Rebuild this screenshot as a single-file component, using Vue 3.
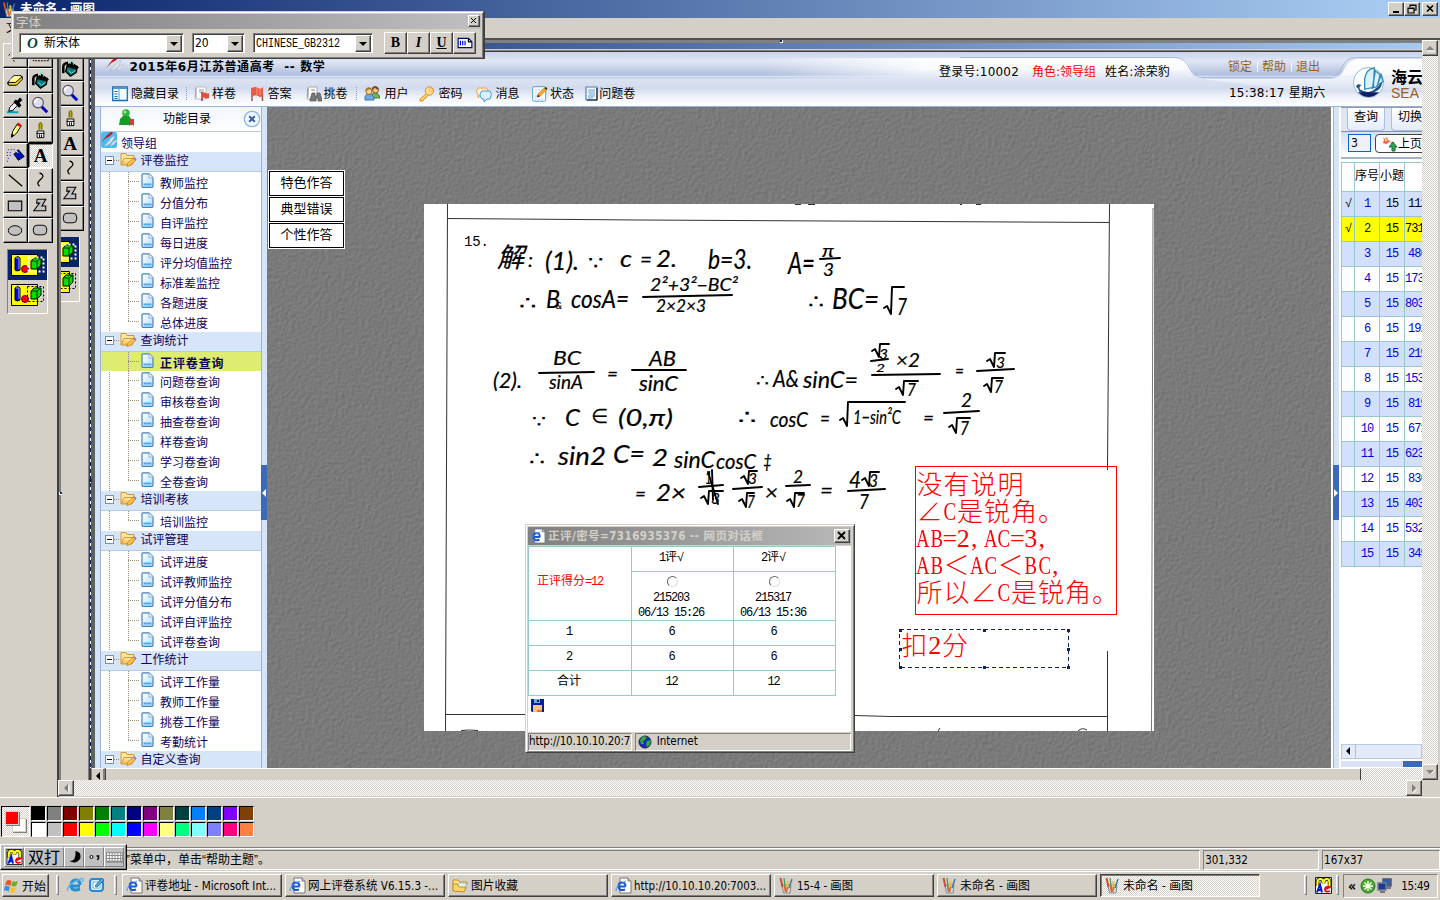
<script setup>
const tree = [
  { name: '评卷监控', items: ['教师监控', '分值分布', '自评监控', '每日进度', '评分均值监控', '标准差监控', '各题进度', '总体进度'] },
  { name: '查询统计', items: ['正评卷查询', '问题卷查询', '审核卷查询', '抽查卷查询', '样卷查询', '学习卷查询', '全卷查询'] },
  { name: '培训考核', items: ['培训监控'] },
  { name: '试评管理', items: ['试评进度', '试评教师监控', '试评分值分布', '试评自评监控', '试评卷查询'] },
  { name: '工作统计', items: ['试评工作量', '教师工作量', '挑卷工作量', '考勤统计'] },
  { name: '自定义查询', items: [] }
]
const tools = ['freesel', 'rectsel', 'eraser', 'bucket', 'dropper', 'magnify', 'pencil', 'brush', 'spray', 'letter', 'line', 'curve', 'rect', 'polygon', 'ellipse', 'round']
const innerTools = ['bucket', 'magnify', 'brush', 'letter', 'curve', 'polygon', 'round']
const nav = [
  ['panel', '隐藏目录', 112, 131], ['sheetflag', '样卷', 194, 212], ['flag', '答案', 250, 267.5], ['binocular', '挑卷', 306, 323.5],
  ['users', '用户', 364, 384.5], ['key', '密码', 419, 438.5], ['chat', '消息', 476, 495.5], ['note', '状态', 532, 550], ['doclist', '问题卷', 584, 599]
].map((n, i, a) => ({ icon: n[0], label: n[1], lead: n[2] - (i ? a[i - 1][3] + a[i - 1][1].length * 12 : 95), gap: n[3] - n[2] }))
const numbers = ['112', '731', '486', '173', '803', '192', '219', '153', '819', '671', '623', '836', '403', '532', '349']
const wideRows = [1, 3, 4, 7, 10, 12, 13]
const swatches = ['#000', '#808080', '#800000', '#808000', '#008000', '#008080', '#000080', '#800080', '#808040', '#004040', '#0080ff', '#004080', '#8000ff', '#804000',
  '#fff', '#c0c0c0', '#f00', '#ff0', '#0f0', '#0ff', '#00f', '#f0f', '#ffff80', '#00ff80', '#80ffff', '#8080ff', '#ff0080', '#ff8040']
const tasks = [
  ['ie', '评卷地址 - Microsoft Int...', 131], ['ie', '网上评卷系统 V6.15.3 -...', 130], ['folderpic', '图片收藏', 47], ['ie', 'http://10.10.10.20:7003...', 132],
  ['paint', '15-4 - 画图', 56], ['paint', '未命名 - 画图', 70], ['paint', '未命名 - 画图', 70]
]
const note = ['没有说明', '∠C是锐角。', 'AB=2,AC=3,', 'AB＜AC＜BC,', '所以∠C是锐角。']
const cell = c => c.charCodeAt(0) > 255 ? 'full' : c === ',' ? 'half comma' : /[A-Z]/.test(c) ? 'half cap' : 'half'
/* x, baseline, size, text, width */
const ink = [
  [497, 267, 27, '解', 27], [528, 267, 20, ':', 5], [545, 270, 25, '(1).', 34], [588, 269, 18, '∵', 15], [620, 267, 24, 'c', 12], [640, 267, 22, '=', 12], [656, 267, 24, '2.', 21], [708, 269, 27, 'b=3.', 44],
  [788, 274, 31, 'A=', 27], [822, 257, 18, 'π', 12], [823, 276, 18, '3', 11],
  [519, 309, 18, '∴', 17], [546, 308, 26, 'B', 14], [556, 309, 10, '&', 6], [571, 308, 25, 'cosA=', 58], [650, 291, 18, '2²+3²−BC²', 88], [656, 312, 18, '2×2×3', 50],
  [808, 308, 19, '∴', 16], [832, 309, 29, 'BC=', 47], [897, 315, 24, '7', 10],
  [493, 388, 21, '(2).', 29], [553, 365, 20, 'BC', 28], [549, 389, 20, 'sinA', 34], [607, 381, 20, '=', 11], [649, 366, 21, 'AB', 27], [639, 391, 21, 'sinC', 39],
  [756, 386, 16, '∴', 13], [773, 387, 23, 'A&', 26], [803, 388, 23, 'sinC=', 55], [879, 359, 13, '3', 9], [876, 372, 12, '2', 9], [896, 367, 19, '×2', 24], [907, 396, 18, '7', 9],
  [955, 378, 20, '=', 9], [996, 368, 15, '3', 9], [994, 393, 17, '7', 9],
  [532, 427, 16, '∵', 14], [565, 426, 24, 'C', 15], [591, 423, 20, '∈', 17], [618, 426, 23, '(0,π)', 55], [738, 424, 20, '∴', 19], [770, 427, 22, 'cosC', 38],
  [820, 426, 22, '=', 10], [853, 424, 20, '1−sin²C', 48], [923, 425, 20, '=', 11], [961, 407, 19, '2', 11], [960, 435, 19, '7', 9],
  [529, 465, 19, '∴', 16], [558, 465, 25, 'sin2', 48], [613, 463, 25, 'C=', 32], [652, 466, 24, '2', 16], [674, 468, 23, 'sinC', 41], [716, 469, 22, 'cosC', 40], [763, 468, 20, '‡', 9],
  [635, 501, 20, '=', 11], [656, 501, 24, '2×', 30], [705, 484, 17, '1', 7], [711, 504, 15, '3', 9], [748, 484, 15, '3', 9], [747, 508, 17, '7', 8], [765, 500, 21, '×', 13],
  [793, 483, 18, '2', 10], [796, 507, 17, '7', 9], [820, 498, 22, '=', 13], [849, 488, 23, '4', 12], [869, 487, 17, '3', 9], [859, 509, 21, '7', 10]
]
/* x, top, bottom, right end of each radical sign */
const roots = [[884, 287, 315, 904], [872, 344, 358, 889], [896, 381, 396, 918], [987, 353, 368, 1005], [984, 378, 393, 1003], [840, 402, 427, 905], [949, 418, 434, 970],
  [701, 491, 505, 723], [741, 471, 485, 757], [739, 493, 508, 754], [787, 493, 508, 804], [862, 472, 487, 879]]
const bars = [[820, 259, 840, 258], [643, 297, 732, 295], [539, 373, 594, 372], [632, 370, 686, 370], [871, 361, 888, 359], [872, 375, 940, 374], [977, 371, 1014, 369],
  [944, 413, 979, 411], [699, 487, 723, 485], [733, 489, 762, 487], [786, 486, 810, 485], [848, 491, 885, 489], [708, 472, 718, 504], [712, 470, 713, 500]]
</script>

<template>
  <div class="screen">
    <svg class="defs" width="0" height="0">
      <defs>
        <filter id="stone" x="0" y="0" width="100%" height="100%" color-interpolation-filters="sRGB">
          <feTurbulence type="fractalNoise" baseFrequency="0.3" numOctaves="3" seed="4" />
          <feDiffuseLighting surfaceScale="0.6" diffuseConstant="0.7" lighting-color="#ffffff"><feDistantLight azimuth="225" elevation="43" /></feDiffuseLighting>
        </filter>
        <linearGradient id="sky" x1="0" y1="0" x2="0" y2="1"><stop offset="0" stop-color="#c8d3ec" /><stop offset=".35" stop-color="#e0e6f4" /><stop offset=".85" stop-color="#b3c1e0" /><stop offset="1" stop-color="#c4d0ea" /></linearGradient>
        <linearGradient id="pale" x1="0" y1="0" x2="0" y2="1"><stop offset="0" stop-color="#fff" /><stop offset=".45" stop-color="#f7f9fd" /><stop offset="1" stop-color="#d6deef" /></linearGradient>
        <linearGradient id="fade" x1="0" x2="1"><stop offset="0" stop-color="#fff" stop-opacity="0" /><stop offset=".35" stop-color="#fff" /></linearGradient>
        <mask id="fademask" maskUnits="userSpaceOnUse" maskContentUnits="userSpaceOnUse" x="765" y="0" width="450" height="32"><rect x="765" width="450" height="32" fill="url(#fade)" /></mask>
        <linearGradient id="gold" x1="0" y1="0" x2="0" y2="1"><stop offset="0" stop-color="#fff0a8" /><stop offset="1" stop-color="#f3b54c" /></linearGradient>
        <linearGradient id="leaf" x1="0" y1="0" x2="1" y2="1"><stop offset="0" stop-color="#fff" /><stop offset="1" stop-color="#b8dcff" /></linearGradient>
      </defs>
      <symbol id="i-freesel" viewBox="0 0 24 24"><path d="M5 12l5-7 2 6 6-5M8 13l3 6" fill="none" stroke="#000" stroke-dasharray="2 2" /></symbol>
      <symbol id="i-rectsel" viewBox="0 0 24 24"><path d="M4.500 6.500h16v11h-16z" fill="none" stroke="#000" stroke-dasharray="2 1" /></symbol>
      <symbol id="i-eraser" viewBox="0 0 24 24"><path d="M4 14l6-7h8l1 2-6 7H4z" fill="#ffff80" stroke="#000" /><path d="M4 14h8l7-6v3l-6 6H5z" fill="#f0d020" stroke="#000" /><path d="M6 12l5-4h5" stroke="#fff" fill="none" /></symbol>
      <symbol id="i-bucket" viewBox="0 0 24 24"><path d="M9 8l10 2-1 6-6 4-5-5z" fill="#008080" stroke="#000" stroke-width="1.500" /><path d="M7 10l6-5 8 6-4 2z" fill="#000" /><path d="M12 7V4h3v4M10 14l3 3 4-3" fill="none" stroke="#7dd" /><path d="M4.500 17V10q0-3 5-4" fill="none" stroke="#000" stroke-width="2.600" /></symbol>
      <symbol id="i-dropper" viewBox="0 0 24 24"><path d="M3 19h12M5 17h5" stroke="#00a8b8" stroke-width="2" /><path d="M5 18l1-4 7-7 3 3-7 7z" fill="#fff" stroke="#000" /><path d="M11 7l6 6M14 9l4-4" stroke="#000" stroke-width="3.500" /></symbol>
      <symbol id="i-magnify" viewBox="0 0 24 24"><path d="M13 13l6 6" stroke="#0000c8" stroke-width="3" /><circle cx="9.500" cy="9" r="5.500" fill="#dcdcec" stroke="#505060" stroke-width="1.200" /><path d="M6 9q0-3 3-4" stroke="#fff" stroke-width="2" fill="none" /></symbol>
      <symbol id="i-pencil" viewBox="0 0 24 24"><path d="M8 19l1-6 5-8 4 2-5 8z" fill="#ffff80" stroke="#000" /><path d="M14 5l3 2" stroke="red" stroke-width="3" /><path d="M8 19l0-3 2 1z" stroke="#000" fill="#000" /></symbol>
      <symbol id="i-brush" viewBox="0 0 24 24"><path d="M10.500 11V5q1.500-3 3 0v6" fill="#b8a800" stroke="#605800" /><path d="M8.500 12.500h7v7h-7zM8 15h8M11 16v3M13 16v3" fill="#fff" stroke="#000" /></symbol>
      <symbol id="i-spray" viewBox="0 0 24 24"><path d="M10 10l5-4 6 7-6 4z" fill="#0010c0" stroke="#000" /><path d="M10 10l2-3 3 2" stroke="#fff" fill="#444" /><path d="M4 6h7M3 9h5M3 12h5M4 15h3M3 18h3" stroke="#0000c8" stroke-dasharray="1 2" /></symbol>
      <symbol id="i-line" viewBox="0 0 24 24"><path d="M5 6l14 12" stroke="#000" stroke-width="1.300" /></symbol>
      <symbol id="i-curve" viewBox="0 0 24 24"><path d="M11 4q5 2 3 5l-4 4q-2 2 1 5" fill="none" stroke="#000" stroke-width="1.300" /></symbol>
      <symbol id="i-rect" viewBox="0 0 24 24"><path d="M4.500 7.500h14v10h-14z" fill="#c0c0c0" stroke="#000" stroke-width="1.200" /></symbol>
      <symbol id="i-polygon" viewBox="0 0 24 24"><path d="M8.500 5.500h9l-4 7h4v5H5l6-8H8z" fill="#c0c0c0" stroke="#000" stroke-width="1.100" /></symbol>
      <symbol id="i-ellipse" viewBox="0 0 24 24"><ellipse cx="11.500" cy="12" rx="7" ry="5" fill="#c0c0c0" stroke="#000" /></symbol>
      <symbol id="i-round" viewBox="0 0 24 24"><rect x="4.500" y="6.500" width="14" height="10" rx="4" fill="#c0c0c0" stroke="#000" /></symbol>
      <symbol id="i-shapes" viewBox="0 0 38 29"><path d="M3.500 4.500h26v21h-26z" fill="#ff0" stroke="#000" /><path d="M7 8q3-3 5 0v12q-3 2-5 0z" fill="#00f" stroke="#000" /><path d="M8 8h3v11" stroke="#aaf" fill="none" /><circle cx="17" cy="19" r="3.500" fill="#f00" stroke="#606" /><path d="M23 11l3-3h7v7l-4 4h-6z" fill="#0d0" stroke="#000" /><path d="M23 11h6v8M29 11l4-3" fill="none" stroke="#030" /></symbol>
      <symbol id="i-panel" viewBox="0 0 16 16"><path d="M.7 1h14.600v13.500H.7z" fill="#f5faff" stroke="#236ca2" stroke-width="1.300" /><path d="M1 2h14" stroke="#5294ca" stroke-width="2" /><path d="M2.500 5.500h3m-3 2.500h3m-3 2.500h3m-3 2h3" stroke="#1670aa" /><path d="M7 3v11" stroke="#4c9ed4" /></symbol>
      <symbol id="i-sheetflag" viewBox="0 0 16 16"><path d="M2 1h10v12H1z" fill="#fff" stroke="#bbb" /><path d="M2 2v10M5 4h5M5 6h5" stroke="#999" /><path d="M8 6v9" stroke="#835" stroke-width="1.500" /><path d="M8 7q2-1 4 0t3 0v5q-2 1-4 0t-3 0z" fill="#df5136" /></symbol>
      <symbol id="i-flag" viewBox="0 0 16 16"><path d="M2 2v13M12.500 8v7" stroke="#9a5b44" stroke-width="1.500" /><path d="M2 2q3-2 6 0t5-1v9q-2 2-5 0t-6 1z" fill="#e95a48" /><path d="M7 2v7M10 2v7" stroke="#f39a7e" /></symbol>
      <symbol id="i-binocular" viewBox="0 0 16 16"><path d="M2 1h9v12H1z" fill="#fff" stroke="#aaa" /><path d="M2 2v9M5 4h4" stroke="#888" /><path d="M6 7h3v3h2V7h3l2 7v1h-4v-3h-2v3H4v-1z" fill="#777" stroke="#555" stroke-width=".7" /></symbol>
      <symbol id="i-users" viewBox="0 0 16 16"><path d="M8 12q-1-5 3-5t5 5z" fill="#71b55e" stroke="#3a803a" /><circle cx="11.500" cy="4" r="3" fill="#f6c58d" stroke="#865423" /><path d="M8.500 3q2-4 5.500 0" fill="none" stroke="#76471b" stroke-width="2" /><path d="M1 14q-1-6 4-6t5 6z" fill="#6ba9df" stroke="#397bae" /><circle cx="5" cy="5.500" r="3" fill="#ffd393" stroke="#966727" /><path d="M2 5q1-4 5-2" fill="none" stroke="#a8752c" stroke-width="2" /></symbol>
      <symbol id="i-key" viewBox="0 0 16 16"><circle cx="10.500" cy="5" r="4.200" fill="#ffd88b" stroke="#d8912b" /><path d="M7.500 7.500L1 13v2h3l1-2 2-1 2-3" fill="#ffd36b" stroke="#d8912b" /><circle cx="12" cy="4" r="1.300" fill="#fff" stroke="#d8912b" stroke-width=".6" /></symbol>
      <symbol id="i-chat" viewBox="0 0 16 16"><path d="M2 2h8q4 3 1 7H4l-2 3V9Q-1 5 2 2z" fill="#fff1ca" stroke="#ef9c52" /><path d="M6 5h8q3 3 0 8h-3l-3 3v-3H6Q2 9 6 5z" fill="#d9f0ff" stroke="#4d9bd1" /></symbol>
      <symbol id="i-note" viewBox="0 0 16 16"><rect x=".7" y=".7" width="13" height="14.500" rx="1.500" fill="#fff" stroke="#529cd0" /><path d="M3 4h8M3 7h5m-5 3h7m-7 3h8" stroke="#a8cff0" stroke-dasharray="2 1" /><path d="M5 11l1-3 6-6 2.500 2-6 6z" fill="#f9a72b" stroke="#dc8b27" stroke-width=".6" /><path d="M5 11.500l1-3 2 2zM12 2l2-1 1.500 1.500L14.500 4z" fill="#333" /></symbol>
      <symbol id="i-doclist" viewBox="0 0 16 16"><path d="M2 1h11v13H2z" fill="#f4faff" stroke="#507fa8" stroke-width="1.200" /><path d="M13 2v12H3" stroke="#111" fill="none" /><path d="M4 4h7m-7 2h7M5 8h6M4 10h7m-7 2h5" stroke="#6f9bcc" /></symbol>
      <symbol id="i-page" viewBox="0 0 13 15"><path d="M2 .8h6l4 4v8.500q0 1-1 1H2q-1 0-1-1v-11Q1 .8 2 .8z" fill="url(#leaf)" stroke="#4680b8" stroke-width="1.200" /><path d="M8 1v4h4" fill="#fff" stroke="#7fb0db" /><path d="M2.500 11.500h8" stroke="#4aaef2" stroke-width="2" /></symbol>
      <symbol id="i-folder" viewBox="0 0 17 15"><path d="M1 13V1.500h5l1 2h7V6" fill="#ffe7a0" stroke="#d79832" /><path d="M1 13l3-6.500h11.500L12 13z" fill="url(#gold)" stroke="#d79832" /><path d="M7 14.500l.5-3 6-5.500 2.500 2-6 5.500z" fill="#ffc344" stroke="#b67826" stroke-width=".7" /><path d="M13.500 6l2.500 2" stroke="#a97bae" stroke-width="2" /></symbol>
      <symbol id="i-logo" viewBox="0 0 16 16"><path d="M0 11Q6 2 10 0q4 0-1 4Q4 6 0 11z" fill="#c71c24" /><path d="M3 14Q7 11 11 5q4-2 2 1-3 7-10 8zM9 14q3-5 6-6 2 0-1 3-2 3-5 3z" fill="#e3e7ee" stroke="#9da9bc" stroke-width=".5" /></symbol>
      <symbol id="i-person" viewBox="0 0 16 17"><circle cx="7" cy="4" r="3.800" fill="#2eb635" /><path d="M4 7h6l3 4 1 5H0l1-6z" fill="#179c25" /><circle cx="6" cy="3" r="1.500" fill="#9bec8b" /><path d="M10 10h5v7l-2-2-3 2z" fill="#d33c38" /></symbol>
      <symbol id="i-ie" viewBox="0 0 17 17"><path d="M5 1h8l3 3v12H5z" fill="#fff" stroke="#777" /><path d="M13 1v3h3" fill="#ccd" stroke="#777" /><path d="M10.500 9.500H3.500q0-4 3.500-4t3.500 4M3.500 9.500q.5 5 6.500 3" fill="none" stroke="#1c55d5" stroke-width="2" /><path d="M1 14Q0 9 11 4" fill="none" stroke="#3b91f2" /></symbol>
      <symbol id="i-ebig" viewBox="0 0 18 18"><path d="M14 10H5q0-6 5-6 4 0 4 5M5 10q1 6 9 3" fill="none" stroke="#258fd3" stroke-width="3" /><path d="M2 15Q-1 10 14 3q5-2 2 3" fill="none" stroke="#62b5e5" stroke-width="1.500" /></symbol>
      <symbol id="i-outlook" viewBox="0 0 18 18"><rect x="2" y="3" width="13" height="12" rx="3" fill="#d5efff" stroke="#278bd2" stroke-width="2" /><path d="M5 6h7v6H5z" fill="#fff" stroke="#70b3db" /><path d="M7 10l7-8 2 2-7 7z" fill="#5ba8db" stroke="#1c77b8" /></symbol>
      <symbol id="i-folderpic" viewBox="0 0 17 17"><path d="M1 14V3h5l2 2h7v3" fill="#ffe28a" stroke="#c58f24" /><path d="M6 6h8v7H6z" fill="#e2f4fb" stroke="#9dbfc7" /><path d="M1 14V7h4l2 3h7l-2 5z" fill="#ffd467" stroke="#c58f24" /></symbol>
      <symbol id="i-paint" viewBox="0 0 16 17"><path d="M3.500 8h9l-1 8H5z" fill="#d7e0e6" stroke="#798b98" /><path d="M4 10L2 1" stroke="#d64b27" stroke-width="2" /><path d="M7 13L5.500 1" stroke="#30a05c" stroke-width="1.300" /><path d="M9 13V4" stroke="#f1bf2f" stroke-width="2" /><path d="M10.500 11l3-9" stroke="#4279b0" stroke-width="1.500" /><path d="M6 9l1 6m2-5l-1 5" stroke="#e0632c" stroke-width="1.500" /></symbol>
      <symbol id="i-windows" viewBox="0 0 16 16"><path d="M3 2q3-1 5 1L7 8Q4 6 1 7z" fill="#e55822" /><path d="M9 3q3 1 6 0l-2 5q-2 1-5 0z" fill="#6bad30" /><path d="M1 8q3-1 5 1l-1 5q-2-2-5-1z" fill="#3a8de0" /><path d="M7 9q3 2 6 0l-2 6q-3 1-5-1z" fill="#f5c331" /></symbol>
      <symbol id="i-ime" viewBox="0 0 17 17"><path d="M.5.5h16v16H.5z" fill="#f4f4f4" stroke="#222" /><path d="M2.500 9V5q0-3 3-3 2.500 0 3 4Q9 2 11.500 2q3 0 3 3v4" fill="none" stroke="#000" stroke-width="3.400" /><path d="M2.500 9V5q0-3 3-3 2.500 0 3 4Q9 2 11.500 2q3 0 3 3v4" fill="none" stroke="#ff0" stroke-width="2.200" /><path d="M2 15.500l3-8 2 8M3 13h4" stroke="#0018df" stroke-width="2" fill="none" /><path d="M15 14q-5 2-5-1.500t5-2.500l-4 2" stroke="#f00000" stroke-width="1.800" fill="none" /></symbol>
      <symbol id="i-floppy" viewBox="0 0 13 14"><path d="M0 0h13v13H1L0 12z" fill="#0020a0" /><path d="M3 0h6v4H3z" fill="#6aaed4" /><path d="M6 1h2v2H6z" fill="#124" /><path d="M2 6h9v7H2z" fill="#ffc080" /><path d="M6 12h5" stroke="#d72" stroke-width="2" /></symbol>
      <symbol id="i-globe" viewBox="0 0 14 14"><circle cx="7" cy="7" r="6" fill="#1628bf" stroke="#224" /><path d="M2 5l3-4 4 1-2 3-2 1 1 3H3zM9 6l4-1-1 5-3 2-1-3z" fill="#32a83b" /></symbol>
    </svg>

    <header class="titlebar"><svg class="ti"><use href="#i-paint" /></svg><b>未命名 - 画图</b>
      <div class="winbtns"><i class="raised"><svg viewBox="0 0 14 12"><path d="M4 9h6" stroke="#000" stroke-width="2" /></svg></i><i class="raised"><svg viewBox="0 0 14 12"><path d="M5 4V2h6v5H9M3 5h6v5H3zM3 5.500h6M5 2.500h6" fill="none" stroke="#000" stroke-width="1.200" /></svg></i><i class="raised last"><svg viewBox="0 0 14 12"><path d="M4 2.500l6 6M10 2.500l-6 6" stroke="#000" stroke-width="1.700" /></svg></i></div>
    </header>
    <div class="menubar">文件</div>

    <div class="work">
      <aside class="toolbox">
        <div class="toolgrid"><div v-for="t in tools" :key="t" class="tool" :class="{ on: t === 'letter' }"><b v-if="t === 'letter'">A</b><svg v-else><use :href="'#i-' + t" /></svg></div></div>
        <div class="options"><div class="opt sel"><svg><use href="#i-shapes" /><rect x="20.500" y="7.500" width="15" height="14" class="dash w" /></svg></div><div class="opt"><svg><use href="#i-shapes" /><rect x="19.500" y="6.500" width="16" height="15" class="dash" /></svg></div></div>
      </aside>

      <section class="frame">
        <div class="canvas">
          <i class="handle h1"></i><i class="handle h2"></i>
          <div class="shot">
            <div class="bluestrip"></div>
            <div class="shotbody">
              <aside class="tools2">
                <div v-for="t in innerTools" :key="t" class="tool2"><b v-if="t === 'letter'">A</b><svg v-else><use :href="'#i-' + t" /></svg></div>
                <div class="options2"><div class="opt sel"><svg><use href="#i-shapes" /><rect x="20.500" y="7.500" width="15" height="14" class="dash w" /></svg></div><div class="opt"><svg><use href="#i-shapes" /><rect x="19.500" y="6.500" width="16" height="15" class="dash" /></svg></div></div>
              </aside>
              <div class="edge"><div class="edgelines"><i class="handle h3"></i></div></div>
              <div class="pagewrap">
                <div class="page">
                  <div class="banner">
                    <svg class="bannerart" viewBox="95 52 1327 55">
                      <rect x="95" y="52" width="1327" height="26" fill="url(#sky)" />
                      <g transform="translate(0 52)"><path d="M765 6H1176C1193 6 1188 25 1202 26L1202 30H765z" fill="url(#pale)" mask="url(#fademask)" /><path d="M960 5.500H1173C1193 5.500 1186 25 1202 25.500H1330C1345 24 1338 5.500 1358 5.500H1422" fill="none" stroke="#a9b8d9" /><path d="M1202 27H1330C1347 27 1341 8 1359 7H1422V40H1310z" fill="url(#pale)" /></g>
                      <path d="M95 76.500H1422" stroke="#e4eaf7" opacity=".7" />
                    </svg>
                    <div class="bannertop">
                      <svg class="logo"><use href="#i-logo" /></svg><b class="apptitle">2015年6月江苏普通高考&nbsp; -- 数学</b>
                      <span class="login">登录号:10002</span><span class="role">角色:领导组</span><span class="name">姓名:涂荣豹</span>
                      <span class="links">锁定<i></i>帮助<i></i>退出</span>
                    </div>
                    <nav class="navbar"><div v-for="n in nav" :key="n.label" class="navitem" :style="{ marginLeft: n.lead + 'px' }"><svg :style="{ marginRight: n.gap - 16 + 'px' }"><use :href="'#i-' + n.icon" /></svg>{{ n.label }}</div><span class="clock">15:38:17 星期六</span></nav>
                    <i class="sep s1"></i><i class="sep s2"></i>
                    <div class="brand"><svg viewBox="0 0 34 34"><circle cx="16" cy="17" r="15.500" fill="#fff" stroke="#8fb8d5" /><path d="M12 24V13Q14 3 22 2l-1 20zM20 23l3-18 5 4-3 12zM25 20l4-11 2 7z" fill="#d9f2fa" stroke="#2c84b9" stroke-width="1.300" /><path d="M3 21q2-4 6-1-3 0-2 4 8 5 14 1t9-9q0 8-8 11-11 3-16-1 0-3-3-5z" fill="#195388" /><path d="M5 27h22q-11 10-22 0z" fill="#0c1d67" /></svg><div><b>海云</b><em>SEA</em></div></div>
                  </div>
                  <div class="pagebody">
                    <aside class="sidebar">
                      <div class="sidehead"><svg class="person"><use href="#i-person" /></svg><span>功能目录</span><svg class="close" viewBox="0 0 18 18"><circle cx="9" cy="9" r="7.700" fill="#eef6ff" stroke="#8fb4df" stroke-width="1.300" /><path d="M6.200 6.200l5.600 5.600m0-5.600l-5.600 5.600" stroke="#3c628d" stroke-width="2" /></svg></div>
                      <div class="rootrow"><svg viewBox="0 0 16 16"><rect width="16" height="16" rx="2" fill="#4abcf0" /><use href="#i-logo" /></svg>领导组</div>
                      <div v-for="g in tree" :key="g.name" class="group">
                        <div class="grouphead"><i class="minus"></i><i class="dots"></i><svg><use href="#i-folder" /></svg><span>{{ g.name }}</span></div>
                        <div v-for="(c, k) in g.items" :key="c" class="leaf" :class="{ active: c === '正评卷查询', end: k === g.items.length - 1 }"><i class="branch"></i><svg><use href="#i-page" /></svg><span>{{ c }}</span></div>
                      </div>
                    </aside>
                    <div class="gutter"><i></i></div>
                    <main class="desk">
                      <svg class="stone" width="1064" height="661"><rect width="1064" height="661" fill="#7b7b7b" /><rect width="1064" height="661" filter="url(#stone)" opacity=".35" /></svg>
                      <div class="quick"><button>特色作答</button><button>典型错误</button><button>个性作答</button></div>
                      <svg class="paper" viewBox="424 204 730 527">
                        <rect x="424" y="204" width="730" height="527" fill="#fff" />
                        <g fill="none" stroke="#333"><path d="M447.500 204L445.500 731M447 218.500L640 220 1109 222.500M1109.500 204L1107.500 470M1107.500 651V731M445 714.500H526M855 715.500L890 716.500H1107" /><path d="M1153 208L1151.500 731" stroke="#777" /><path d="M795 204.500h6M808 204.500h7M960 204.500h2M976 204.500h5M461 730.500q8-1 17 0M938 731l2-3M1078 731q4-4 9-1" /></g>
                        <text x="464" y="246" class="printed" textLength="25">15.</text>
                        <g class="ink"><text v-for="(t, k) in ink" :key="k" :x="t[0]" :y="t[1]" :font-size="t[2]" :textLength="t[4]" lengthAdjust="spacingAndGlyphs">{{ t[3] }}</text></g>
                        <g fill="none" stroke="#000" stroke-width="1.900" stroke-linecap="round" stroke-linejoin="round">
                          <path v-for="(r, k) in roots" :key="k" :d="`M${r[0]} ${r[2] - 7}l3-2 4 8L${r[0] + 8} ${r[1]}H${r[3]}`" />
                          <path v-for="(b, k) in bars" :key="'b' + k" :d="`M${b[0]} ${b[1]}L${b[2]} ${b[3]}`" />
                        </g>
                      </svg>
                      <div class="note"><div v-for="l in note" :key="l"><span v-for="(c, k) in l" :key="k" :class="cell(c)">{{ c }}</span></div></div>
                      <div class="deduct"><svg width="171" height="40"><rect x=".5" y=".5" width="169" height="38" fill="none" stroke="#0a246a" stroke-dasharray="4 3" shape-rendering="crispEdges" /><path d="M0 0h3v3H0zM84 0h3v3h-3zM168 0h3v3h-3zM0 19h3v3H0zM168 19h3v3h-3zM0 37h3v3H0zM84 37h3v3h-3zM168 37h3v3h-3z" fill="#0a246a" /></svg><span class="full">扣</span><span class="half">2</span><span class="full">分</span></div>
                      <div class="dialog">
                        <div class="dtitle"><svg><use href="#i-ie" /></svg><b>正评/密号=7316935376 -- 网页对话框</b><i class="raised"><svg viewBox="0 0 14 12"><path d="M3 2l7 7m0-7L3 9" stroke="#000" stroke-width="1.800" /></svg></i></div>
                        <div class="dbody">
                          <div class="dtable">
                            <div class="c score"><span class="z">正评得分</span>=12</div><div class="c">1<span class="z">评√</span></div><div class="c">2<span class="z">评√</span></div>
                            <div class="c rev"><i class="radio"></i><span>215203</span><span>06/13 15:26</span></div><div class="c rev"><i class="radio"></i><span>215317</span><span>06/13 15:36</span></div>
                            <div class="c">1</div><div class="c">6</div><div class="c">6</div><div class="c">2</div><div class="c">6</div><div class="c">6</div><div class="c"><span class="z">合计</span></div><div class="c">12</div><div class="c">12</div>
                          </div>
                          <svg class="floppy"><use href="#i-floppy" /></svg>
                        </div>
                        <div class="dstatus"><span class="url">http://10.10.10.20:7</span><span class="zone"><svg><use href="#i-globe" /></svg>Internet</span></div>
                      </div>
                    </main>
                    <div class="gutter right"><i></i></div>
                    <aside class="results">
                      <div class="rbtns"><span>查询</span><span>切换</span></div>
                      <div class="pager"><span class="num">3</span><span class="prev"><svg viewBox="0 0 16 16"><path d="M1 1l2 2 2-2 1 3 2 1-2 2-2 1-3-1 1-3z" fill="#ef5564" /><circle cx="4" cy="4" r="1.500" fill="#fd4" /><path d="M7 6l4-1 1 5" fill="#e9c24d" /><path d="M11 6l4 5h-2v4h-3v-4H7z" fill="#2aa54b" stroke="#246848" /></svg>上页</span></div>
                      <div class="rtable">
                        <div class="rr head"><span></span><span>序号</span><span>小题</span><span></span></div>
                        <div v-for="(n, k) in numbers" :key="n" class="rr" :class="{ odd: k % 2 === 0, hit: k === 1 }"><span>{{ k < 2 ? '√' : '' }}</span><span class="blue">{{ k + 1 }}</span><span>15</span><span class="id" :class="{ wide: wideRows.includes(k) }">{{ n }}</span></div>
                      </div>
                      <div class="rscroll"><i></i></div>
                    </aside>
                  </div>
                </div>
                <div class="hs2"><i class="arrow"></i><i class="thumb"></i></div>
              </div>
            </div>
          </div>
        </div>
        <div class="vs dither"><i class="raised"><svg viewBox="0 0 14 14"><path d="M3 9l4-4 4 4z" fill="#808080" /><path d="M4 10h8" stroke="#fff" /></svg></i><i class="raised"><svg viewBox="0 0 14 14"><path d="M3 5h8L7 9z" fill="#808080" /><path d="M8 9l4-4" stroke="#fff" /></svg></i></div>
        <div class="hs dither"><i class="raised"><svg viewBox="0 0 14 14"><path d="M9 3v8L5 7z" fill="#808080" /><path d="M10 4v8" stroke="#fff" /></svg></i><i class="raised"><svg viewBox="0 0 14 14"><path d="M5 3v8l4-4z" fill="#808080" /><path d="M6 12l4-4" stroke="#fff" /></svg></i></div>
      </section>
    </div>

    <div class="palette"><div class="current dither"><i class="bgc"></i><i class="fgc"></i></div><div class="swatches"><i v-for="c in swatches" :key="c" :style="{ background: c }"></i></div></div>
    <div class="status"><span class="help"><span>”菜单中，单击“帮助主题”。</span></span><span class="pos">301,332</span><span class="dim">167x37</span></div>
    <footer class="taskbar">
      <div class="start raised"><svg><use href="#i-windows" /></svg>开始</div><i class="grip"></i><svg class="ql"><use href="#i-ebig" /></svg><svg class="ql"><use href="#i-outlook" /></svg><i class="grip g2"></i>
      <div class="tasks"><div v-for="(t, k) in tasks" :key="k" class="task raised" :class="{ pressed: k === 6 }"><svg class="tic"><use :href="'#i-' + t[0]" /></svg><svg class="ttext" width="134" height="18"><text x="0" y="13" :textLength="t[2]" lengthAdjust="spacingAndGlyphs">{{ t[1] }}</text></svg></div></div>
      <i class="grip g3"></i><svg class="imei"><use href="#i-ime" /></svg><i class="grip g4"></i>
      <div class="tray"><span>«</span><svg viewBox="0 0 16 16"><circle cx="8" cy="8" r="7" fill="#4aab2b" stroke="#2b7424" /><path d="M8 3v10M3 8h10M4.500 4.500l7 7m0-7l-7 7" stroke="#fff" stroke-width="1.300" /></svg><svg viewBox="0 0 16 16"><path d="M6 1h8v7H6z" fill="#315cb0" stroke="#50566e" stroke-width="1.500" /><path d="M1 5h8v7H1z" fill="#163a94" stroke="#707891" stroke-width="1.500" /><path d="M3 14h5M9 10h5" stroke="#777" stroke-width="2" /></svg><span class="time">15:49</span></div>
    </footer>

    <div class="imebar"><i class="k1"><svg><use href="#i-ime" /></svg></i><i class="k2">双打</i><i class="k3"><svg viewBox="0 0 16 16"><path d="M9 2q6 1 5 7-4 7-11 3 7 0 6-10z" /></svg></i><i class="k4"><svg viewBox="0 0 16 16"><circle cx="5" cy="8" r="1.500" fill="#fff" stroke="#000" /><path d="M10 7h2v2l-1 2" fill="none" stroke="#000" stroke-width="1.500" /></svg></i><i class="k5"><svg viewBox="0 0 18 16"><path d="M0 3h18v11H0z" fill="#888" /><path d="M1 5h16M1 8h16M1 11h16" stroke="#fff" stroke-width="2" stroke-dasharray="2 1" /></svg></i></div>

    <div class="fontbar">
      <div class="ftitle"><span>字体</span><i class="raised"><svg viewBox="0 0 10 10"><path d="M2 2l5 5m0-5L2 7" stroke="#000" /></svg></i></div>
      <div class="frow"><div class="combo c1"><em>O</em><span>新宋体</span><i class="raised drop"></i></div><div class="combo c2"><span>20</span><i class="raised drop"></i></div><div class="combo c3"><span><svg width="90" height="14"><text x="0" y="11" textLength="84" lengthAdjust="spacingAndGlyphs">CHINESE_GB2312</text></svg></span><i class="raised drop"></i></div>
        <div class="fbtns"><b class="raised">B</b><b class="raised it">I</b><b class="raised un">U</b><b class="raised"><svg viewBox="0 0 14 12"><path d="M1 2h9l3 3v5H1z" fill="#fff" stroke="#000080" /><path d="M3 4v4m2-4v4m2-4v4" stroke="#00f" /><path d="M10 2v3h3" fill="none" stroke="#000" /></svg></b></div></div>
    </div>
  </div>
</template>

<style>
html, body { margin: 0; overflow: hidden; background: #d4d0c8; }
</style>

<style scoped>
* { box-sizing: border-box; }
i, em { font-style: normal; }
i { display: block; flex: none; }
svg { display: block; flex: none; }
.defs { position: absolute; }
.screen { position: relative; width: 1440px; height: 900px; display: flex; flex-direction: column; overflow: hidden; background: #d4d0c8; color: #000; font: 12px/14px "DejaVu Sans Condensed", "Noto Sans CJK SC", sans-serif; white-space: nowrap; }
.raised { background: #d4d0c8; border: 1px solid; border-color: #fff #404040 #404040 #fff; box-shadow: inset -1px -1px #808080; }
.dither { background: repeating-conic-gradient(#fff 0 25%, #d4d0c8 0 50%) 0 0 / 2px 2px; }
.titlebar { height: 18px; flex: none; display: flex; overflow: hidden; background: linear-gradient(90deg, #0a246a, #a6caf0 96%); color: #fff; }
.ti { width: 15px; height: 17px; margin: 1px 1px 0 2px; }
.titlebar b { font-size: 12.500px; line-height: 18px; margin-left: 2px; }
.winbtns { display: flex; margin: 2px 2px 0 auto; height: 14px; }
.winbtns i { width: 16px; height: 14px; }
.winbtns .last { margin-left: 2px; }
.menubar { height: 20px; flex: none; padding: 3px 6px; }
.work { display: flex; height: 760px; flex: none; }
.toolbox { width: 57px; flex: none; padding: 5px 0 0 3px; }
.toolgrid { display: grid; grid-template-columns: 25px 25px; grid-auto-rows: 25px; }
.tool, .tool2 { border: 1px solid; border-color: #fff #000 #000 #fff; box-shadow: inset -1px -1px #808080; }
.tool { width: 25px; height: 25px; }
.tool svg, .tool2 svg { width: 23px; height: 23px; }
.tool b, .tool2 b { display: block; font: bold 19px/23px "Liberation Serif", serif; text-align: center; }
.tool.on { border-color: #000 #fff #fff #000; box-shadow: inset 1px 1px #808080; background: repeating-conic-gradient(#fff 0 25%, #d4d0c8 0 50%) 0 0 / 2px 2px; }
.options { width: 41px; height: 65px; margin: 6px 0 0 4px; border: 1px solid; border-color: #808080 #fff #fff #808080; }
.opt { height: 31px; width: 39px; overflow: hidden; }
.opt.sel { background: #0a246a; height: 30px; }
.opt svg { width: 38px; height: 29px; }
.dash { fill: none; stroke: #000; stroke-dasharray: 2 2; }
.dash.w { stroke: #fff; stroke-width: 2; }
.frame { width: 1383px; border: solid #404040; border-width: 2px 0 0 2px; display: grid; grid-template-columns: 1363px 16px; grid-template-rows: 740px 16px; border-top-color: #505050; align-content: start; }
.canvas { background: #808080; padding: 3px 0 0 2px; position: relative; overflow: hidden; }
.handle { position: absolute; width: 3px; height: 3px; background: #0a246a; border: solid #fff; border-width: 0 0 1px 1px; }
.h1 { left: 721px; top: 0; border-width: 0 1px 1px 0; } .h2 { left: 0; top: 452px; } .h3 { left: -1px; top: 430px; border: 0; }
.shot { background: #d4d0c8; height: 737px; }
.bluestrip { height: 6px; background: linear-gradient(90deg, #0a246a, #a6caf0); }
.shotbody { display: flex; height: 731px; }
.tools2 { width: 27px; padding-top: 7px; overflow: hidden; }
.tool2 { width: 23px; height: 25px; border-left: 0; overflow: hidden; }
.tool2 svg { margin-left: -2px; }
.tool2 b { margin-left: -4px; }
.options2 { margin-top: 6px; width: 19px; height: 65px; overflow: hidden; border: solid #fff; border-width: 0 1px 1px 0; }
.options2 svg { margin-left: -21px; }
.edge { width: 3px; border-left: 1px solid #808080; background: #404040; }
.edgelines { position: relative; height: 719px; margin-left: 1px; width: 1px; background: repeating-linear-gradient(#0a246a 0 4px, #fff 4px 7px); }
.pagewrap { width: 1331px; border-top: 1px solid #d4d0c8; }
.page { height: 718px; border-top: 1px solid #808080; border-left: 4px solid #606060; box-shadow: inset 0 1px #404040; padding-top: 1px; }
.banner { height: 55px; position: relative; border-bottom: 1px solid #9db1d9; background: linear-gradient(#c5d1ea 26px, #dce3f2 27px, #d2dbee 36px, #f1f4fa 46px, #fdfeff); font-family: "DejaVu Sans", "Noto Sans CJK SC", sans-serif; }
.bannerart { position: absolute; left: 0; top: 0; width: 1327px; height: 55px; }
.bannertop { position: relative; display: flex; height: 27px; }
.logo { width: 18px; height: 17px; margin: 4px 0 0 11px; }
.apptitle { width: 200px; margin: 8px 0 0 5.500px; font-size: 12px; letter-spacing: .58px; }
.login { margin: 13px 0 0 609.500px; width: 93px; letter-spacing: .2px; }
.role { margin-top: 13px; width: 73px; color: red; }
.name { margin-top: 13px; width: 123px; letter-spacing: .15px; }
.links { display: flex; color: #96601c; margin-top: 8px; }
.links i { width: 1px; height: 10px; background: #f4f7ff; margin: 2px 4px 0 5px; }
.navbar { position: relative; display: flex; align-items: center; height: 28px; }
.navitem { display: flex; align-items: center; line-height: 16px; padding-top: 1px; }
.navitem svg { width: 16px; height: 16px; }
.clock { position: absolute; left: 1134px; top: 7px; letter-spacing: .23px; }
.sep { position: absolute; top: 35px; height: 13px; border-left: 1px dotted #8c9fc2; } .s1 { left: 91px; } .s2 { left: 261px; }
.brand { position: absolute; left: 1258px; top: 14px; width: 69px; overflow: hidden; display: flex; }
.brand svg { width: 33px; height: 33px; margin-right: 5px; }
.brand b { display: block; font-size: 16px; line-height: 17px; margin-top: 3px; }
.brand em { display: block; font: 14px/14px "Liberation Sans", sans-serif; color: #96601c; }
.pagebody { display: flex; height: 661px; background: #d6e4f8; }
.sidebar { width: 162px; flex: none; margin-left: 5px; border-left: 1px solid #9fb2dc; border-right: 1px solid #9fb2dc; background: #fff; overflow: hidden; color: #10005a; font-family: "Noto Sans CJK SC", sans-serif; }
.sidehead { display: flex; height: 25px; align-items: flex-start; color: #000; border-bottom: 1px solid #b8cce8; background: linear-gradient(#f1f5fb, #fff); }
.person { width: 16px; height: 17px; margin: 2px 28px 0 18px; }
.sidehead span { line-height: 22px; width: 80px; }
.close { width: 18px; height: 18px; margin-top: 3px; }
.rootrow { height: 20px; display: flex; line-height: 22px; }
.rootrow svg { width: 16px; height: 16px; margin-right: 4px; }
.group { background: repeating-linear-gradient(#948b7d 0 1px, transparent 1px 2px) 8px 0 / 1px 100% no-repeat; }
.grouphead { height: 20px; background: #d7e5f8; border-bottom: 1px solid #b5cce9; display: flex; line-height: 16px; overflow: hidden; }
.minus { width: 9px; height: 9px; margin: 4px 0 0 4px; border: 1px solid #7894ae; background: linear-gradient(#000, #000) center / 5px 1px no-repeat #fff; }
.dots { width: 5px; height: 1px; margin-top: 8px; border-top: 1px dotted #948b7d; }
.grouphead svg { width: 17px; height: 15px; margin-left: 1px; }
.grouphead span { margin-left: 3.500px; }
.leaf { height: 20px; display: flex; line-height: 22px; overflow: hidden; }
.leaf.active { height: 19px; background: #dced72; font-weight: bold; letter-spacing: .9px; }
.branch { width: 12px; height: 20px; margin-left: 27px; background: linear-gradient(90deg, #948b7d 50%, transparent 50%) 0 9px / 2px 1px repeat-x, linear-gradient(#948b7d 50%, transparent 50%) 0 0 / 1px 2px repeat-y; }
.leaf.end .branch { height: 10px; }
.leaf svg { width: 13px; height: 15px; margin: 1px 6px 0 1px; }
.gutter { width: 5px; position: relative; flex: none; background: #d6e4f8; }
.gutter i { position: absolute; left: -1px; top: 358px; width: 6px; height: 55px; background: #396bba; }
.gutter i::after { content: ""; position: absolute; left: 1px; top: 24px; border: 4px solid transparent; border-left: 0; border-right-color: #fff; }
.desk { width: 1064px; position: relative; flex: none; overflow: hidden; }
.stone { position: absolute; left: 0; top: 0; }
.quick { position: absolute; left: 1px; top: 63px; width: 77px; padding: 1px; background: #fff; display: grid; gap: 1px; }
.quick button { height: 25px; border: 1px solid #000; background: #fff; font: 13px/14px "Noto Sans CJK SC", sans-serif; padding: 0 0 3px; color: #000; }
.paper { position: absolute; left: 157px; top: 97px; width: 730px; height: 527px; }
.printed { font: 14px "Liberation Mono", monospace; }
.ink { font-family: "Lato", "DejaVu Sans", "Noto Sans CJK SC", sans-serif; font-style: italic; font-weight: 400; stroke: #000; stroke-width: .2px; }
.note { position: absolute; left: 648px; top: 359px; width: 202px; height: 149px; border: 1px solid red; color: red; padding-top: 2px; font: 26px/27px "Noto Sans CJK SC", sans-serif; font-weight: 300; }
.note > div { display: flex; height: 27px; }
.full { width: 27px; text-align: center; flex: none; font-family: "Noto Sans CJK SC", sans-serif; }
.half { width: 13.500px; flex: none; display: flex; justify-content: center; font-family: "Liberation Serif", serif; padding-top: 2px; }
.cap { transform: scaleX(.72); }
.comma { justify-content: flex-start; padding-left: 1px; }
.deduct { position: absolute; left: 632px; top: 522px; width: 171px; height: 40px; display: flex; padding: 1px 0 0 2px; color: red; font: 26px/27px "Noto Sans CJK SC", sans-serif; font-weight: 300; }
.deduct svg { position: absolute; left: 0; top: 0; }
.dialog { position: absolute; left: 258px; top: 417px; width: 330px; height: 229px; padding: 2px 3px 2px 2px; background: #d4d0c8; border: 1px solid; border-color: #d4d0c8 #404040 #404040 #d4d0c8; box-shadow: inset 1px 1px #fff, inset -1px -1px #808080; font: 12px/14px "Liberation Mono", "Noto Sans CJK SC", monospace; }
.dtitle { height: 18px; display: flex; align-items: center; background: linear-gradient(90deg, #808080, #b8b8b8); color: #d4d0c8; font-family: "DejaVu Sans Condensed", "Noto Sans CJK SC", sans-serif; }
.dtitle > svg { width: 16px; height: 16px; margin: 0 2px; }
.dtitle b { font-size: 11.500px; width: 286px; letter-spacing: .46px; }
.dtitle i { width: 16px; height: 14px; }
.dbody { height: 186px; margin-top: 1px; background: #fff; }
.dtable { width: 308px; height: 150px; display: grid; grid-template-columns: 103px 102px 102px; grid-template-rows: 25px 49px 25px 25px 25px; border: solid #97c9c9; border-width: 1px 0 0 1px; }
.c { border: solid #97c9c9; border-width: 0 1px 1px 0; padding: 4px 22px 0 0; text-align: center; letter-spacing: -1.200px; }
.z { letter-spacing: 0; }
.c.score { grid-row: span 2; color: red; padding: 28px 20px 0 0; }
.rev { padding: 4px 23px 0 0; display: flex; flex-direction: column; align-items: center; }
.rev span { height: 14px; }
.rev span:nth-child(2) { margin-top: -1px; margin-bottom: 1px; }
.radio { width: 11px; height: 11px; border: 1px solid; border-color: #666 #ddd #ddd #666; border-radius: 50%; margin-bottom: 5px; margin-left: 2px; }
.floppy { width: 13px; height: 14px; margin: 3px 0 0 3px; }
.dstatus { display: flex; gap: 3px; height: 18px; margin-top: 1px; font: 11.500px/15px "DejaVu Sans Condensed", sans-serif; }
.dstatus span { border: 1px solid; border-color: #808080 #fff #fff #808080; overflow: hidden; }
.url { width: 104px; letter-spacing: -.15px; }
.zone { width: 217px; display: flex; padding-left: 2px; }
.zone svg { width: 14px; height: 14px; margin-right: 5px; margin-top: 1px; }
.gutter.right { width: 10px; border-left: 2px solid #fff; box-shadow: inset 1px 0 #9db0d8, inset -2px 0 #fff; }
.gutter.right i { left: 0; width: 6px; }
.gutter.right i::after { border: 4px solid transparent; border-right: 0; border-left-color: #fff; }
.results { width: 81px; flex: none; overflow: hidden; background: linear-gradient(90deg, #dae1f4 62px, #396bba 62px) 0 654px / 100% 6px no-repeat #fff; font-family: "Noto Sans CJK SC", sans-serif; }
.rbtns { height: 25px; display: flex; gap: 6px; padding-left: 6px; border-bottom: 1px solid #8295a9; border-top: 1px solid #8d9bb1; background: #dfe6f3; }
.rbtns span { width: 38px; flex: none; height: 23px; border: 1px solid #a9bfe3; border-top: 0; border-radius: 0 0 4px 4px; background: linear-gradient(#fff, #e5ecf8); text-align: center; line-height: 15px; }
.pager { height: 27px; display: flex; gap: 4px; padding: 2px 0 0 7px; background: linear-gradient(#d7dfed, #fff); border-bottom: 2px solid #a3b1c9; }
.num { width: 23px; height: 18px; border: 1px solid #0764c9; background: #eef1f8; padding-left: 2px; flex: none; font: 12px/16px "DejaVu Sans Condensed", sans-serif; }
.prev { width: 60px; height: 19px; border: 1px solid #444; border-radius: 4px; background: #fff; display: flex; padding: 1px 0 0 6px; flex: none; }
.prev svg { width: 16px; height: 16px; }
.rtable { margin-top: 3px; border: solid #97c9c9; border-width: 1px 0 0 1px; width: 100px; font-family: "Liberation Mono", "Noto Sans CJK SC", monospace; }
.rr { display: grid; grid-template-columns: 13px 25px 25px 37px; height: 25px; line-height: 24px; color: #0000d8; text-align: center; border-bottom: 1px solid #97c9c9; letter-spacing: -1px; }
.rr span { border-right: 1px solid #97c9c9; overflow: hidden; }
.rr.head { height: 29px; line-height: 28px; color: #000; letter-spacing: 0; }
.rr.odd { background: #d3e0fd; }
.rr.hit { background: #ff0; }
.rr:nth-child(2) span, .rr:nth-child(3) span { color: #000; }
.rr:nth-child(2) .blue, .rr:nth-child(3) .blue { color: #0000d8; }
.rr .id { text-align: left; padding-left: 3px; }
.rr .id.wide { padding-left: 0; }
.rscroll { margin-top: 177px; height: 15px; border: 1px solid #b6c8e4; background: #e3eafa; }
.rscroll i { width: 14px; height: 13px; border-right: 1px solid #a9bfe3; padding: 2px 0 0 4px; }
.rscroll i::after { content: ""; display: block; border: 4px solid transparent; border-left: 0; border-right-color: #000; width: 0; }
.hs2 { height: 12px; display: flex; background: repeating-conic-gradient(#fff 0 25%, #d4d0c8 0 50%) 0 0 / 2px 2px; }
.arrow { width: 14px; border: solid; border-color: #fff #808080; border-width: 1px 2px 0 1px; background: #d4d0c8; padding: 3px 0 0 4px; }
.arrow::after { content: ""; display: block; width: 0; border: 4px solid transparent; border-left: 0; border-right-color: #000; }
.thumb { width: 1256px; background: #d4d0c8; border: solid; border-color: #fff #404040; border-width: 1px 1px 0 1px; }
.vs { display: flex; flex-direction: column; justify-content: space-between; }
.vs i, .hs i { width: 16px; height: 16px; }
.hs { display: flex; justify-content: space-between; margin-left: -1px; }
.palette { height: 50px; flex: none; display: flex; padding: 8px 0 0 1px; border-top: 1px solid #fff; margin-top: -1px; }
.current { width: 29px; height: 31px; border: 1px solid; border-color: #000 #fff #fff #000; position: relative; }
.current i { position: absolute; width: 14px; height: 14px; border: 1px solid #d4d0c8; }
.bgc { background: #fff; left: 10px; top: 11px; box-shadow: 1px 1px #808080; }
.fgc { background: red; left: 3px; top: 4px; box-shadow: 1px 1px #808080; }
.swatches { display: grid; grid-template-columns: repeat(14, 16px); grid-auto-rows: 16px; margin-left: 1px; }
.swatches i { width: 15px; height: 15px; border: 1px solid; border-color: #000 #fff #fff #000; box-shadow: 0 0 0 .5px #bbb; }
.status { height: 24px; flex: none; border-top: 1px solid #808080; box-shadow: inset 0 1px #fff; display: flex; gap: 3px; padding-top: 2px; font-size: 11.500px; }
.status > span { border: 1px solid; border-color: #808080 #fff #fff #808080; height: 20px; padding: 3px 1px; line-height: 13px; }
.help { width: 1201px; display: flex; overflow: hidden; font-family: "Liberation Sans", "Noto Sans CJK SC", sans-serif; font-size: 12px; }
.help > span { margin-left: 124px; }
.pos { width: 116px; } .dim { width: 118px; }
.taskbar { height: 29px; flex: none; border-top: 1px solid #fff; display: flex; padding: 2px 0 0 2px; align-items: flex-start; }
.start { width: 47px; height: 23px; display: flex; align-items: center; font: 12px "Noto Sans CJK SC", sans-serif; }
.start svg { width: 15px; height: 16px; margin: 0 3px 0 1px; }
.grip { width: 3px; height: 20px; margin: 1px 7px 0 7px; border: 1px solid; border-color: #fff #808080 #808080 #fff; }
.ql { width: 18px; height: 18px; margin: 2px 4px 0 0; }
.g2 { margin: 1px 4px 0 4px; }
.tasks { position: absolute; left: 122px; display: flex; gap: 3px; }
.task { width: 160px; height: 23px; display: flex; align-items: center; }
.tic { width: 17px; height: 17px; margin: 0 2px 0 3px; }
.ttext { font: 12px "DejaVu Sans Condensed", "Noto Sans CJK SC", sans-serif; }
.pressed { background: repeating-conic-gradient(#fff 0 25%, #d4d0c8 0 50%) 0 0 / 2px 2px; border-color: #404040 #fff #fff #404040; box-shadow: inset 1px 1px #808080; }
.g3 { margin: 1px 8px 0 auto; }
.imei { width: 17px; height: 17px; margin-top: 3px; }
.g4 { margin: 1px 4px 0 4px; }
.tray { width: 95px; height: 24px; margin-right: 2px; border: 1px solid; border-color: #808080 #fff #fff #808080; display: flex; align-items: center; padding-left: 4px; font-size: 11.500px; }
.tray > span:first-child { font-weight: bold; font-size: 14px; margin-right: 4px; }
.tray svg { width: 16px; height: 16px; margin-right: 1px; }
.time { margin-left: 7px; letter-spacing: -.3px; }
.imebar { position: absolute; left: 0; top: 844px; width: 127px; height: 26px; display: flex; padding: 2px 3px; background: #c0c0c0; border: 1px solid; border-color: #fff #000 #000 #fff; box-shadow: inset -1px -1px #808080; }
.imebar i { height: 20px; border: 1px solid; border-color: #fff #808080 #808080 #fff; display: flex; align-items: center; justify-content: center; overflow: hidden; }
.k1 { width: 20px; } .imebar .k2 { width: 40px; font: 16px/18px "Noto Sans CJK SC", sans-serif; padding-bottom: 2px; } .k3, .k4, .k5 { width: 20px; }
.imebar svg { width: 17px; height: 16px; }
.fontbar { position: absolute; left: 11px; top: 11px; width: 473px; height: 48px; padding: 2px; background: #d4d0c8; border: 1px solid; border-color: #d4d0c8 #404040 #404040 #d4d0c8; box-shadow: inset 1px 1px #fff, inset -1px -1px #808080, 1px 0 #404040; }
.ftitle { height: 15px; display: flex; justify-content: space-between; background: linear-gradient(90deg, #808080, #c0c0c0); color: #d4d0c8; font: 12.500px/15px "Noto Sans CJK SC", sans-serif; padding: 1px 1px 0 2px; }
.ftitle span { margin-top: -1px; }
.ftitle i { width: 12px; height: 12px; }
.frow { display: flex; padding: 4px 0 0 5px; }
.combo { height: 20px; border: 1px solid; border-color: #808080 #fff #fff #808080; box-shadow: inset 1px 1px #404040; background: #fff; display: flex; align-items: center; padding: 1px; }
.combo span { flex: 1; }
.combo em { font: italic bold 15px "Liberation Serif", serif; width: 23px; padding-left: 6px; color: #044; }
.c1 { width: 165px; font-family: "Noto Sans CJK SC", sans-serif; } .c2 { width: 53px; margin-left: 8px; } .c3 { width: 120px; margin-left: 8px; font: 12px "Liberation Mono", monospace; }
.c1 span { padding-bottom: 2px; } .c2 span { padding-left: 1px; } .c3 span { padding-left: 1px; }
.drop { width: 16px; height: 17px; padding: 6px 0 0 3px; }
.drop::after { content: ""; display: block; width: 0; border: 4px solid transparent; border-bottom: 0; border-top-color: #000; }
.fbtns { display: flex; margin: -1px 0 0 11px; }
.fbtns b { width: 23px; height: 22px; font: bold 14px/19px "Liberation Serif", serif; text-align: center; }
.fbtns .it { font-style: italic; } .fbtns .un { text-decoration: underline; }
.fbtns svg { width: 16px; height: 14px; margin: 3px; }
</style>
